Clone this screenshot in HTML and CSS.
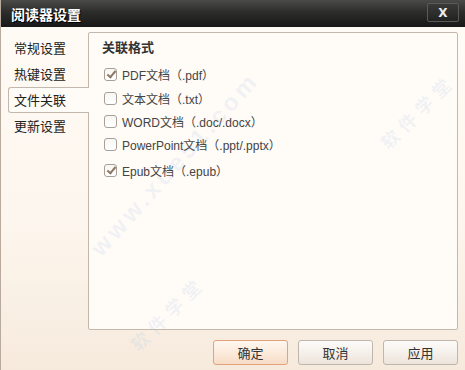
FILE: index.html
```html
<!DOCTYPE html>
<html lang="zh-CN">
<head>
    <meta charset="UTF-8">
    <title>阅读器设置</title>
    <link rel="stylesheet" href="styles.css">
</head>
<body>
    <div class="window">
        <div class="titlebar">
            <span class="title">阅读器设置</span>
            <button class="close">X</button>
        </div>
        <div class="main">
            <ul class="nav">
                <li>常规设置</li>
                <li>热键设置</li>
                <li class="active">文件关联</li>
                <li>更新设置</li>
            </ul>
            <div class="panel">
                <div class="panel-title">关联格式</div>
                <label class="row"><span class="check checked"></span>PDF文档（.pdf）</label>
                <label class="row"><span class="check"></span>文本文档（.txt）</label>
                <label class="row"><span class="check"></span>WORD文档（.doc/.docx）</label>
                <label class="row"><span class="check"></span>PowerPoint文档（.ppt/.pptx）</label>
                <label class="row"><span class="check checked"></span>Epub文档（.epub）</label>
            </div>
        </div>
        <div class="footer">
            <button class="btn primary">确定</button>
            <button class="btn">取消</button>
            <button class="btn">应用</button>
        </div>
        <!-- faint watermark over the dialog -->
        <div class="mark mark-a">软件学堂</div>
        <div class="mark mark-b">www.xue51.com</div>
        <div class="mark mark-c">软件学堂</div>
    </div>
</body>
</html>
```

FILE: styles.css
```css
body {
    margin: 0;
    font-family: "Liberation Sans", "Noto Sans CJK SC", sans-serif;
    font-size: 12px;
    color: #333;
}
.window {
    position: relative;
    overflow: hidden;
    width: 465px;
    height: 370px;
    display: flex;
    flex-direction: column;
    background: linear-gradient(#fffbf6, #fdf6ee 60%, #f6eadc);
    border-left: 1px solid #b8aa9c;
    box-sizing: border-box;
}
.titlebar {
    height: 27px;
    display: flex;
    align-items: center;
    justify-content: space-between;
    padding: 0 6px 0 10px;
    background: linear-gradient(#4a4a48, #2c2c2b 45%, #181818);
}
.title {
    color: #fff;
    font-family: "Noto Sans CJK SC", sans-serif;
    font-size: 14px;
    font-weight: bold;
    text-shadow: 1px 1px 0 #000;
}
.close {
    width: 32px;
    height: 19px;
    margin-top: -2px;
    padding: 0;
    border: 1px solid #5a5a58;
    border-radius: 2px;
    background: linear-gradient(#3a3a39, #222);
    color: #eee;
    font-family: "DejaVu Sans", sans-serif;
    font-size: 12px;
    font-weight: bold;
}
.main {
    flex: 1;
    display: flex;
    padding: 5px 7px 0 7px;
}
.nav {
    list-style: none;
    margin: 0;
    padding: 3px 0 0 0;
    width: 80px;
    font-family: "Noto Sans CJK SC", sans-serif;
    font-size: 13px;
    color: #222;
}
.nav li {
    height: 26px;
    line-height: 26px;
    padding-left: 6px;
    box-sizing: border-box;
}
.nav li.active {
    position: relative;
    margin-right: -1px;
    border: 1px solid #c4b8ac;
    border-right: none;
    border-radius: 3px 0 0 3px;
    line-height: 24px;
    padding-left: 5px;
    background: #fffcf8;
}
.panel {
    width: 370px;
    height: 298px;
    box-sizing: border-box;
    border: 1px solid #c4b8ac;
    border-radius: 2px;
    background: #fffbf7;
    padding: 4px 0 0 13px;
}
.panel-title {
    height: 20px;
    line-height: 20px;
    font-family: "Noto Sans CJK SC", sans-serif;
    font-size: 13px;
    font-weight: bold;
    color: #333;
    margin-bottom: 5px;
}
.row {
    display: flex;
    align-items: center;
    height: 24px;
    padding-left: 2px;
    color: #444;
    font-size: 12px;
}
.row:nth-of-type(3) {
    height: 22px;
}
.row:nth-of-type(4) {
    height: 25px;
}
.row:last-child {
    height: 26px;
}
.check {
    width: 13px;
    height: 13px;
    box-sizing: border-box;
    border: 1px solid #a8a098;
    border-radius: 3px;
    background: linear-gradient(#f6f6f4, #ffffff);
    margin-right: 5px;
    position: relative;
}
.check.checked::after {
    content: "";
    position: absolute;
    left: 4px;
    top: 0px;
    width: 3px;
    height: 7px;
    border: solid #8c7866;
    border-width: 0 2px 2px 0;
    transform: rotate(40deg);
}
.footer {
    height: 40px;
    display: flex;
    justify-content: flex-end;
    align-items: flex-start;
    gap: 10px;
    padding: 10px 7px 0 0;
    box-sizing: border-box;
}
.btn {
    width: 75px;
    height: 25px;
    padding: 0;
    border: 1px solid #bfb6ae;
    border-radius: 3px;
    background: linear-gradient(#fdfbf9, #f4eee8 60%, #ece4dc);
    font-family: "Noto Sans CJK SC", sans-serif;
    font-size: 13px;
    color: #333;
}
.btn.primary {
    border-color: #e2a27a;
    background: linear-gradient(#fff7ef, #fbe8d8 60%, #f7dcc6);
}
.mark {
    position: absolute;
    pointer-events: none;
    color: rgba(130, 175, 225, 0.12);
    font-family: "Noto Sans CJK SC", sans-serif;
    font-weight: bold;
    white-space: nowrap;
    transform: rotate(-45deg);
}
.mark-a {
    left: 368px;
    top: 98px;
    font-size: 18px;
    letter-spacing: 6px;
}
.mark-b {
    left: 55px;
    top: 150px;
    font-family: "Liberation Sans", sans-serif;
    font-size: 24px;
    letter-spacing: 4px;
    transform: rotate(-48deg);
}
.mark-c {
    left: 118px;
    top: 300px;
    font-size: 18px;
    letter-spacing: 6px;
}
```
